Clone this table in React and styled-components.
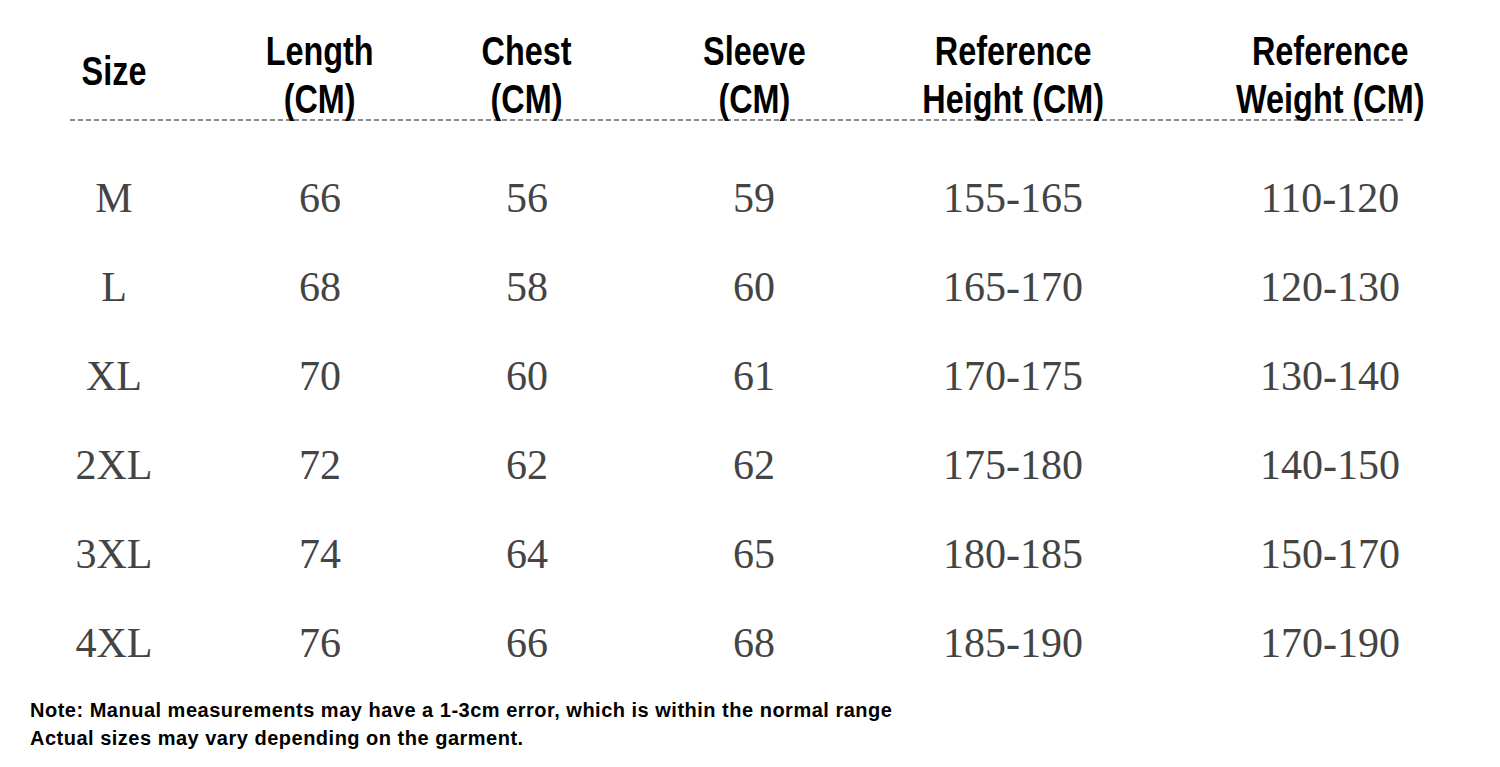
import React from 'react';
import styled, { createGlobalStyle } from 'styled-components';

const GlobalStyle = createGlobalStyle`
  html, body {
    margin: 0;
    padding: 0;
    background: #ffffff;
    overflow: hidden;
  }
`;

const Page = styled.div`
  width: 1500px;
  height: 767px;
  background: #ffffff;
  padding-top: 27px;
  box-sizing: border-box;
`;

const Grid = styled.div`
  display: grid;
  grid-template-columns: 228px 184px 230px 224px 294px 340px;
  justify-items: center;
`;

// condensed bold look: Arial-metric bold squeezed horizontally
const HeadCell = styled.div`
  font-family: "Liberation Sans", Arial, sans-serif;
  font-weight: 700;
  font-size: 40px;
  line-height: 48px;
  color: #000;
  text-align: center;
  white-space: nowrap;
  align-self: center;
  transform: scaleX(0.81);
  margin-bottom: ${p => (p.single ? '8px' : '0')};
`;

const Divider = styled.div`
  margin: -4px 0 0 70px;
  width: 1336px;
  height: 2px;
  background: repeating-linear-gradient(90deg, #8a8a8a 0 5px, transparent 5px 8px);
`;

const Body = styled.div`
  margin-top: 32px;
`;

const Row = styled(Grid)`
  height: 89px;
  align-items: center;
`;

const Cell = styled.div`
  font-family: "Liberation Serif", "DejaVu Serif", serif;
  font-size: 42px;
  color: #444;
`;

const Note = styled.div`
  margin: 9px 0 0 30px;
  font-family: "Liberation Sans", Arial, sans-serif;
  font-weight: 700;
  font-size: 20px;
  letter-spacing: 0.5px;
  line-height: 28px;
  color: #000;
  white-space: nowrap;
`;

const headers = [
  ['Size'],
  ['Length', '(CM)'],
  ['Chest', '(CM)'],
  ['Sleeve', '(CM)'],
  ['Reference', 'Height (CM)'],
  ['Reference', 'Weight (CM)'],
];

const rows = [
  ['M', '66', '56', '59', '155-165', '110-120'],
  ['L', '68', '58', '60', '165-170', '120-130'],
  ['XL', '70', '60', '61', '170-175', '130-140'],
  ['2XL', '72', '62', '62', '175-180', '140-150'],
  ['3XL', '74', '64', '65', '180-185', '150-170'],
  ['4XL', '76', '66', '68', '185-190', '170-190'],
];

export default function App() {
  return (
    <Page>
      <GlobalStyle />
      <Grid>
        {headers.map((h, i) => (
          <HeadCell key={i} single={h.length === 1}>
            {h.map((line, j) => (
              <div key={j}>{line}</div>
            ))}
          </HeadCell>
        ))}
      </Grid>
      <Divider />
      <Body>
        {rows.map((r, i) => (
          <Row key={i}>
            {r.map((v, j) => (
              <Cell key={j}>{v}</Cell>
            ))}
          </Row>
        ))}
      </Body>
      <Note>
        <div>Note: Manual measurements may have a 1-3cm error, which is within the normal range</div>
        <div>Actual sizes may vary depending on the garment.</div>
      </Note>
    </Page>
  );
}
